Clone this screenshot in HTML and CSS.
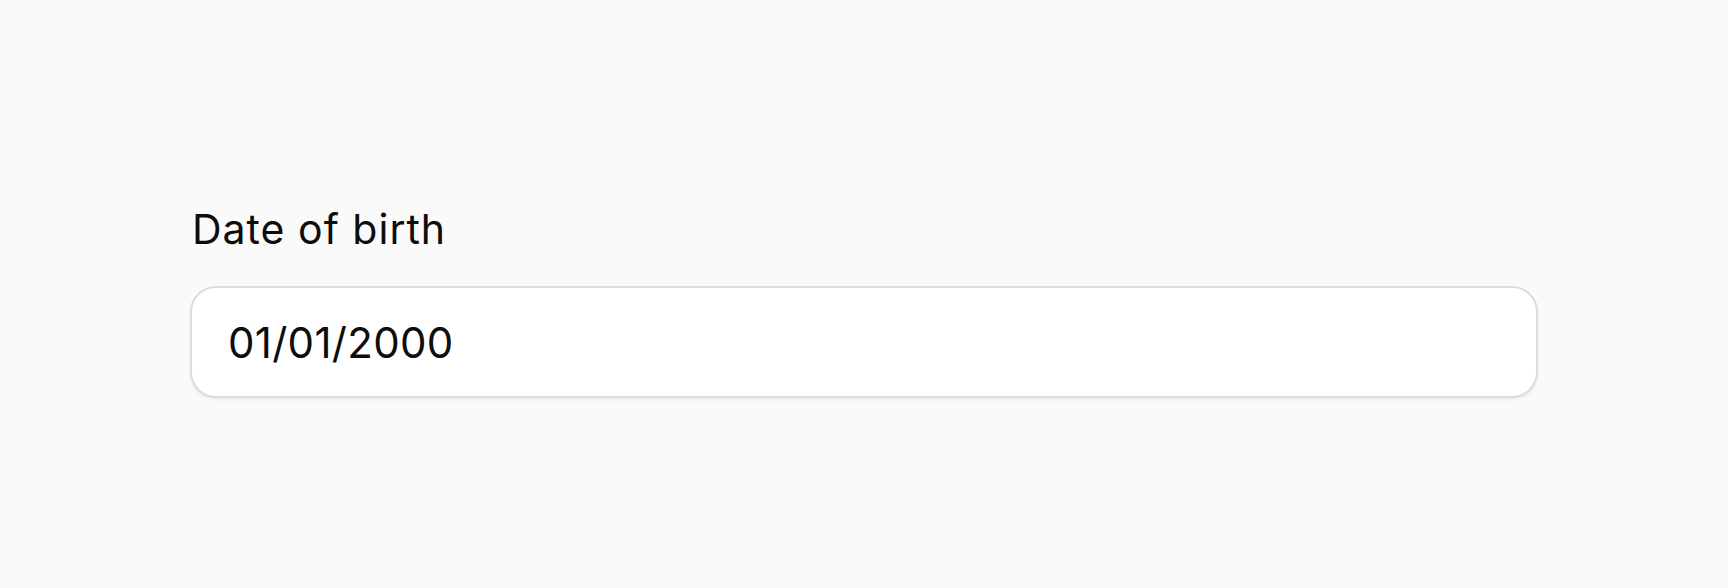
FILE: index.html
```html
<!DOCTYPE html>
<html lang="en">
<head>
    <meta charset="UTF-8">
    <meta name="viewport" content="width=device-width, initial-scale=1.0">
    <title>Date of birth</title>
    <link rel="stylesheet" href="styles.css">
</head>
<body>
    <div class="page">
        <div class="field">
            <label class="field-label" for="dob">Date of birth</label>
            <input class="field-input" id="dob" type="text" value="01/01/2000">
        </div>
    </div>
</body>
</html>
```

FILE: styles.css
```css
* {
    margin: 0;
    padding: 0;
    box-sizing: border-box;
}

body, html {
    height: 100%;
    font-family: Inter, "Noto Sans", sans-serif;
    background: #fafafa;
    color: #111;
}

/* Center the field on the page */
.page {
    display: flex;
    justify-content: center;
    align-items: center;
    height: 100%;
    padding: 11px 190px 0;
}

.field {
    width: 100%;
    display: flex;
    flex-direction: column;
    gap: 29px;
}

.field-label {
    font-size: 41px;
    font-weight: 400;
    line-height: 56px;
    letter-spacing: 1px;
    padding-left: 2px;
    color: #0d0d0d;
}

.field-input {
    width: 100%;
    height: 112px;
    padding: 0 36px;
    font-family: inherit;
    font-size: 42px;
    letter-spacing: 0.3px;
    color: #0d0d0d;
    background: #fff;
    border: 2px solid #dcdcdc;
    border-radius: 26px;
    box-shadow: 0 2px 3px rgba(0, 0, 0, 0.06);
    outline: none;
}
```
